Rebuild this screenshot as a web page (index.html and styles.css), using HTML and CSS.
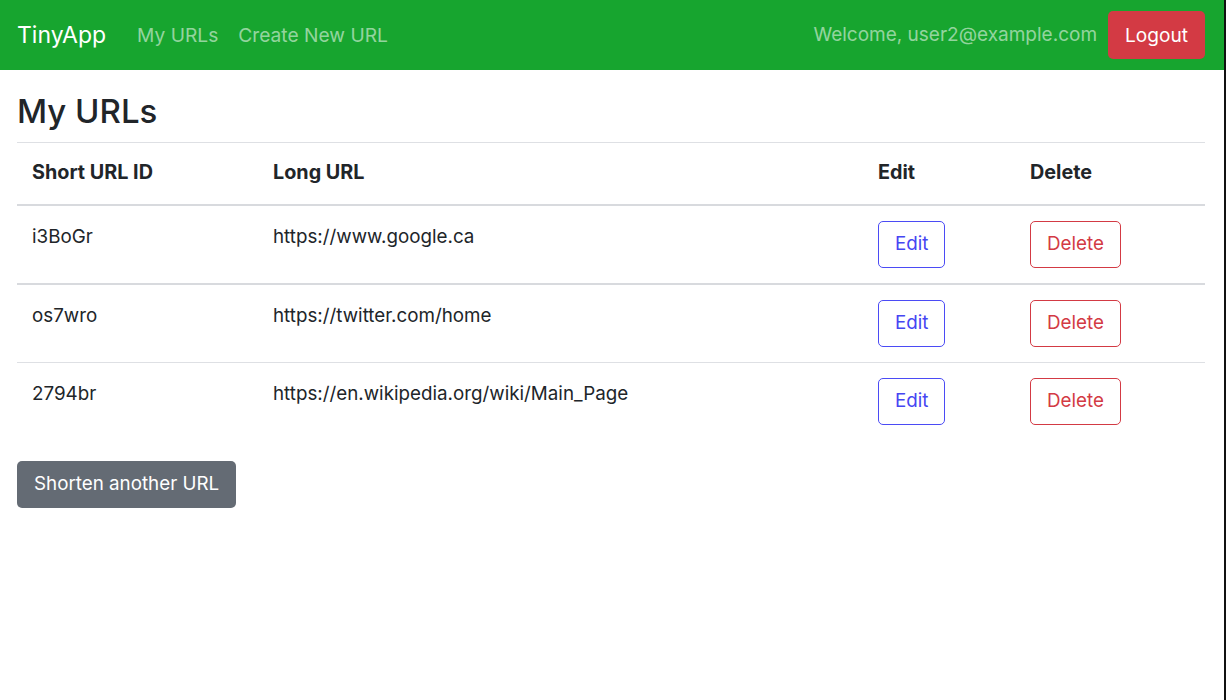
FILE: index.html
```html
<!DOCTYPE html>
<html lang="en">
<head>
<meta charset="utf-8">
<title>TinyApp</title>
<link rel="stylesheet" href="styles.css">
</head>
<body>
<nav class="navbar">
  <div class="nav-left">
    <a class="brand" href="#">TinyApp</a>
    <a class="nav-link" href="#">My URLs</a>
    <a class="nav-link" href="#">Create New URL</a>
  </div>
  <div class="nav-right">
    <span class="welcome">Welcome, user2@example.com</span>
    <button class="btn btn-danger">Logout</button>
  </div>
</nav>
<main class="content">
  <h1 class="title">My URLs</h1>
  <table class="urls">
    <thead>
      <tr>
        <th class="col-id">Short URL ID</th>
        <th class="col-long">Long URL</th>
        <th class="col-edit">Edit</th>
        <th class="col-del">Delete</th>
      </tr>
    </thead>
    <tbody>
      <tr class="row-first">
        <td>i3BoGr</td>
        <td>https://www.google.ca</td>
        <td><button class="btn btn-outline-primary">Edit</button></td>
        <td><button class="btn btn-outline-danger">Delete</button></td>
      </tr>
      <tr>
        <td>os7wro</td>
        <td>https://twitter.com/home</td>
        <td><button class="btn btn-outline-primary">Edit</button></td>
        <td><button class="btn btn-outline-danger">Delete</button></td>
      </tr>
      <tr class="row-last">
        <td>2794br</td>
        <td>https://en.wikipedia.org/wiki/Main_Page</td>
        <td><button class="btn btn-outline-primary">Edit</button></td>
        <td><button class="btn btn-outline-danger">Delete</button></td>
      </tr>
    </tbody>
  </table>
  <button class="btn btn-secondary">Shorten another URL</button>
</main>
<div class="edge"></div>
</body>
</html>
```
FILE: styles.css
```css
* { box-sizing: border-box; }
html, body { margin: 0; padding: 0; }
body {
  font-family: Inter, "Noto Sans", sans-serif;
  font-size: 18.8px;
  line-height: 1.4;
  color: #212529;
  background: #fff;
  width: 1225px;
}
a { text-decoration: none; }

.navbar {
  height: 70px;
  background: #17a52f;
  display: flex;
  align-items: center;
  justify-content: space-between;
  padding: 0 20px 0 17px;
}
.nav-left, .nav-right { display: flex; align-items: center; }
.brand { color: #fff; font-size: 23px; margin-right: 31px; }
.nav-link { color: rgba(255,255,255,0.55); font-size: 19.2px; margin-right: 20px; }
.welcome { color: rgba(255,255,255,0.55); font-size: 19px; margin-right: 11px; }

.btn {
  font-family: inherit;
  font-size: 18.8px;
  line-height: 1.4;
  border-radius: 5px;
  border: 1px solid transparent;
  padding: 0 16px;
  height: 47px;
  background: transparent;
  cursor: pointer;
}
.btn-danger { background: #d33a44; color: #fff; height: 48px; font-size: 19.1px; padding: 0 16px; }
.btn-outline-primary { border-color: #4b4bf5; color: #4646f2; }
.btn-outline-danger { border-color: #d33a44; color: #d33a44; }
.btn-secondary { background: #646b74; color: #fff; }

.content { padding: 0 20px 0 17px; }
.title {
  margin: 0;
  padding-top: 22px;
  height: 72px;
  font-size: 33px;
  font-weight: 500;
  line-height: 1.2;
}
.urls {
  width: 100%;
  border-collapse: collapse;
  border-top: 1px solid #dee0e4;
  margin-bottom: 21px;
}
.urls th {
  text-align: left;
  font-weight: 700;
  font-size: 19.8px;
  height: 62px;
  padding: 0 15px;
  border-bottom: 2px solid #d8dade;
}
.urls td {
  vertical-align: top;
  padding: 15px 15px 15px;
  height: 78px;
  border-bottom: 1px solid #dee0e4;
}
.row-first td { border-bottom: 2px solid #d8dade; }
.row-last td { border-bottom: none; }
.urls td:nth-child(1), .urls td:nth-child(2) { padding-top: 18px; }
.col-id { width: 241px; }
.col-long { width: 605px; }
.col-edit { width: 152px; }

.edge {
  position: fixed;
  top: 0;
  right: 0;
  width: 2px;
  height: 100%;
  background: #111;
}
```
